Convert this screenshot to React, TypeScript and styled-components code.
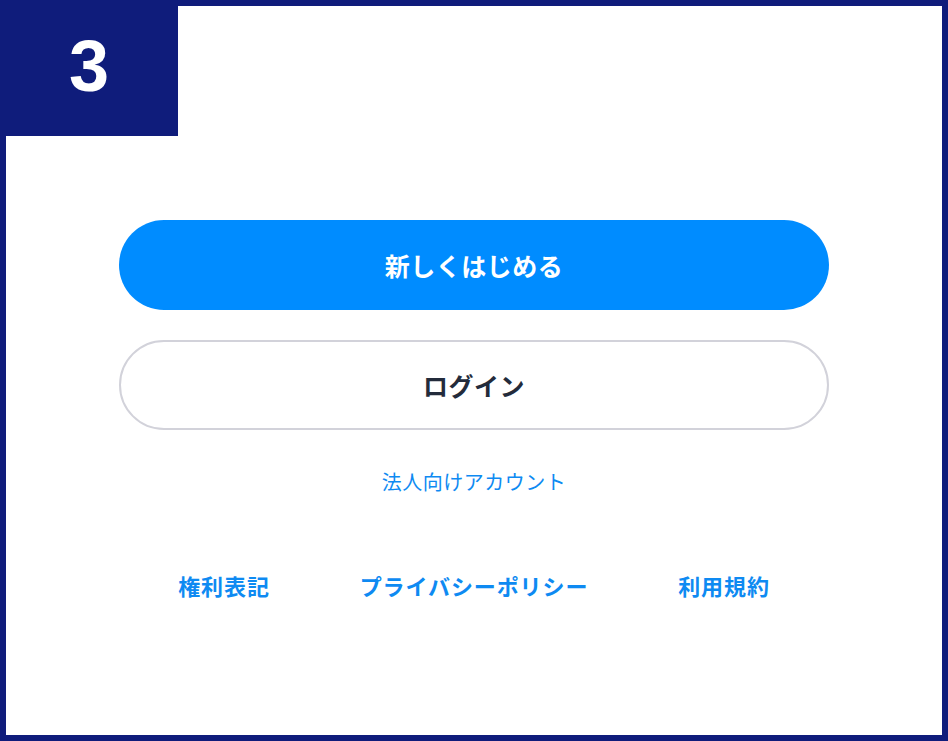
import styled, { createGlobalStyle } from 'styled-components'

const navy = '#0f1c7b'
const blue = '#008cff'
const linkBlue = '#0e8af2'

const GlobalStyle = createGlobalStyle`
    html, body {
        margin: 0;
        padding: 0;
        background: #fff;
    }
    body {
        font-family: "Noto Sans CJK JP", "Noto Sans", sans-serif;
    }
`

const Frame = styled.main`
    position: relative;
    box-sizing: border-box;
    width: 948px;
    height: 741px;
    border: 6px solid ${navy};
    background: #fff;
    display: flex;
    flex-direction: column;
    align-items: center;
    padding-top: 214px;
`

const StepBadge = styled.div`
    position: absolute;
    top: -6px;
    left: -6px;
    width: 178px;
    height: 136px;
    padding-bottom: 4px;
    box-sizing: border-box;
    background: ${navy};
    color: #fff;
    display: flex;
    align-items: center;
    justify-content: center;
    font-family: "Liberation Sans", Arial, sans-serif;
    font-weight: 700;
    font-size: 72px;
    line-height: 1;
`

const Actions = styled.div`
    display: flex;
    flex-direction: column;
    gap: 30px;
    width: 710px;
`

const PillButton = styled.button<{ $primary?: boolean }>`
    box-sizing: border-box;
    width: 100%;
    height: 90px;
    border-radius: 45px;
    border: ${p => (p.$primary ? 'none' : '2px solid #d2d2da')};
    background: ${p => (p.$primary ? blue : '#fff')};
    color: ${p => (p.$primary ? '#fff' : '#232b3b')};
    font-family: inherit;
    font-weight: 700;
    font-size: 25px;
    letter-spacing: 0.5px;
    cursor: pointer;
`

const CorporateLink = styled.a`
    margin-top: 37px;
    color: ${linkBlue};
    font-size: 20px;
    line-height: 30px;
    letter-spacing: 0.5px;
    text-decoration: none;
`

const FooterLinks = styled.nav`
    margin-top: 71px;
    display: grid;
    grid-template-columns: repeat(3, 250px);
    justify-items: center;
`

const FooterLink = styled.a`
    color: ${linkBlue};
    font-weight: 700;
    font-size: 22px;
    line-height: 34px;
    letter-spacing: 0.9px;
    text-decoration: none;
`

export default function App() {
    return (
        <>
            <GlobalStyle />
            <Frame>
                <StepBadge>3</StepBadge>
                <Actions>
                    <PillButton $primary>新しくはじめる</PillButton>
                    <PillButton>ログイン</PillButton>
                </Actions>
                <CorporateLink href='#'>法人向けアカウント</CorporateLink>
                <FooterLinks>
                    <FooterLink href='#'>権利表記</FooterLink>
                    <FooterLink href='#'>プライバシーポリシー</FooterLink>
                    <FooterLink href='#'>利用規約</FooterLink>
                </FooterLinks>
            </Frame>
        </>
    )
}
